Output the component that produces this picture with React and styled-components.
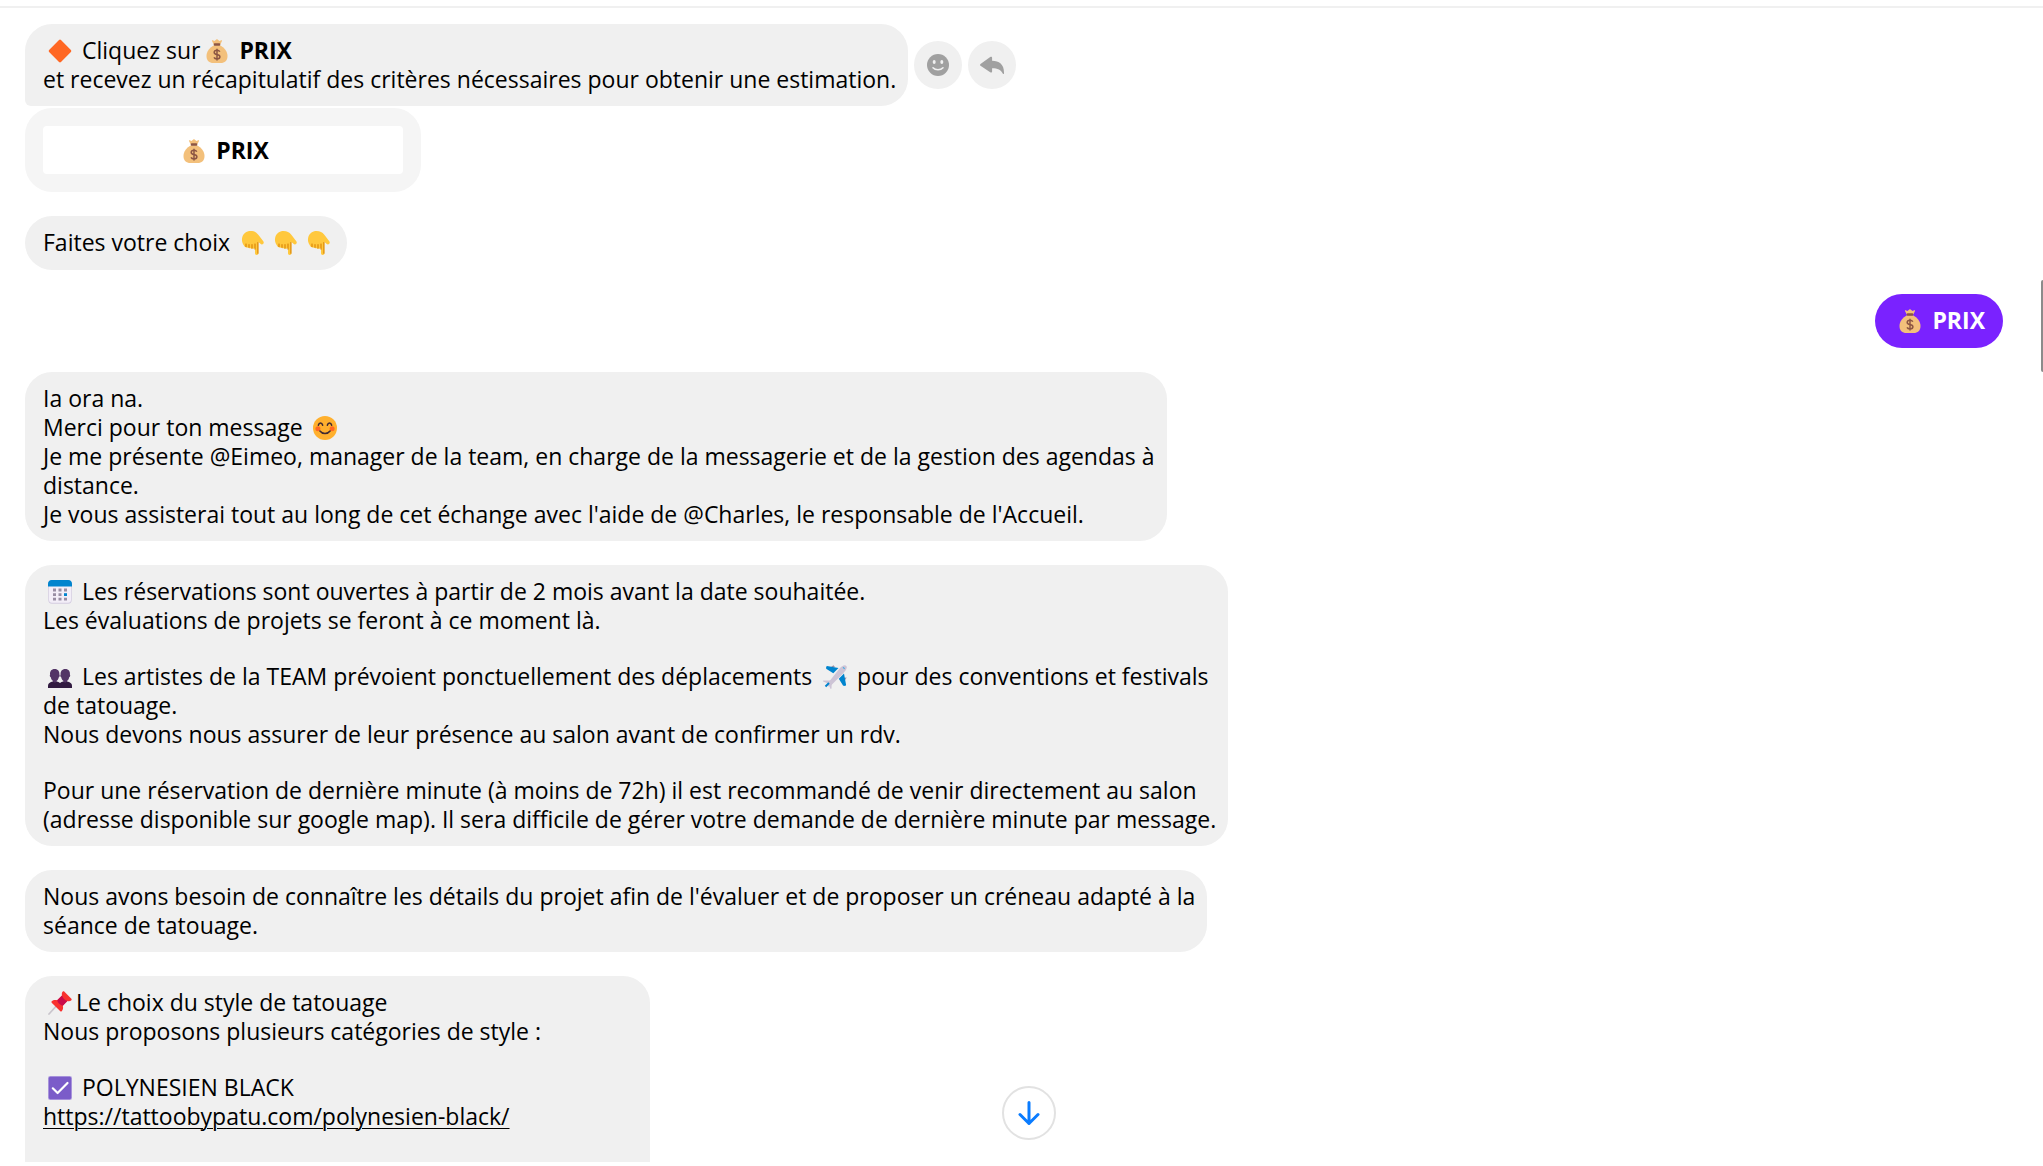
import React from "react";
import styled, { createGlobalStyle } from "styled-components";

const GlobalStyle = createGlobalStyle`
  * { box-sizing: border-box; }
  html, body { margin: 0; background: #fff; overflow: hidden; }
  body, button {
    font-family: "Open Sans", "Noto Sans", "Segoe UI", sans-serif;
    font-size: 23px;
    line-height: 29px;
    color: #000;
  }
`;

const Page = styled.main`
  position: relative;
  height: 100vh;
  padding: 6px 0 4px;
  overflow: hidden;
`;

const Thread = styled.section`
  display: flex;
  flex-direction: column;
  gap: 24px;
  height: 100%;
  padding: 16px 40px 0 25px;
  border-top: 2px solid #f0f0f0;
  overflow: hidden;
`;

const Group = styled.div`
  display: flex;
  flex-direction: column;
  gap: 2px;
  flex-shrink: 0;
`;

const Row = styled.div`
  display: flex;
  align-items: center;
  justify-content: ${(p) => (p.$own ? "flex-end" : "flex-start")};
  gap: 6px;
  flex-shrink: 0;
`;

const Bubble = styled.div`
  display: flex;
  flex-direction: column;
  gap: 27px;
  min-height: 54px;
  min-width: ${(p) => p.$minWidth || "0"};
  padding: ${(p) => (p.$own ? "12px 18px" : "12px 12px 12px 18px")};
  border-radius: 27px;
  border-bottom-left-radius: ${(p) => (p.$joined ? "6px" : "27px")};
  background: ${(p) => (p.$own ? "#7a22ff" : "#f0f0f0")};
  color: ${(p) => (p.$own ? "#fff" : "#000")};
  font-weight: ${(p) => (p.$own ? 700 : 400)};
`;

const LongBubble = styled(Bubble)`
  height: 320px;
`;

const Text = styled.p`
  margin: 0;
  white-space: nowrap;
`;

const Strong = styled.strong`
  font-weight: 700;
`;

const Link = styled.a`
  color: inherit;
  text-decoration: underline;
  text-underline-offset: 3px;
  text-decoration-thickness: 1px;
`;

const Card = styled.div`
  align-self: flex-start;
  padding: 18px;
  border-radius: 27px;
  background: #f5f5f5;
`;

const CardButton = styled.button`
  display: block;
  width: 360px;
  height: 48px;
  padding: 0;
  border: 0;
  border-radius: 4px;
  background: #fff;
  color: #000;
  font-weight: 700;
`;

const RoundButton = styled.button`
  display: grid;
  place-items: center;
  width: 48px;
  height: 48px;
  padding: 0;
  border: 0;
  border-radius: 50%;
  background: #f0f0f0;
  color: #a0a0a0;
`;

const ScrollDown = styled(RoundButton)`
  position: absolute;
  bottom: 26px;
  left: calc(50% - 20px);
  width: 54px;
  height: 54px;
  border: 2px solid #e2e2e2;
  background: #fff;
  color: #0a7cff;
`;

const ScrollThumb = styled.div`
  position: absolute;
  top: 24%;
  right: 0;
  width: 2px;
  height: 92px;
  border-radius: 2px 0 0 2px;
  background: #8b8b8b;
`;

const EmojiBox = styled.span`
  display: inline-flex;
  justify-content: center;
  width: 33px;
  height: 24px;
  vertical-align: -4px;
`;

const Emoji = ({ label, children }) => (
  <EmojiBox role="img" aria-label={label}>
    <svg width="24" height="24" viewBox="0 0 24 24">{children}</svg>
  </EmojiBox>
);

const Diamond = () => (
  <Emoji label="losange orange">
    <rect x="3.6" y="3.6" width="16.8" height="16.8" rx="1.4" transform="rotate(45 12 12)" fill="#ff6723" />
  </Emoji>
);

const MoneyBag = () => (
  <Emoji label="sac d'argent">
    <path d="M8.7 5.6 7 2.1c-.3-.6.2-1 .8-.8l1.6.6L11.3.4c.4-.3.9-.3 1.3 0l1.9 1.5 1.7-.6c.6-.2 1.1.2.8.8l-1.7 3.5z" fill="#f3c07b" />
    <path d="M9 6.3h6c4.3 2.2 7.5 6.2 7.5 10.7 0 4.7-2.6 7-7 7h-7c-4.4 0-7-2.3-7-7C1.5 12.5 4.7 8.5 9 6.3Z" fill="#f3c07b" />
    <rect x="8.8" y="4.3" width="6.4" height="2.4" rx=".8" fill="#8c5543" />
    <path d="M14.8 12.7c-.5-1.1-1.5-1.5-2.8-1.5-1.6 0-2.8.8-2.8 2.2 0 3.1 5.7 1.3 5.7 4.4 0 1.4-1.2 2.2-2.9 2.2-1.4 0-2.5-.5-3-1.6M12 9.7v11.8" fill="none" stroke="#8c5543" strokeWidth="1.5" />
  </Emoji>
);

const PointDown = () => (
  <Emoji label="index vers le bas">
    <path d="M1.2 6.5C2.2 2.6 5.4 0 9.5 0c3.6 0 5.8 1.2 7.8 3.8l5 6.5c.7.9.6 2-.2 2.7-.8.6-1.9.5-2.6-.2L17.4 11v11.3c0 1-.7 1.7-1.7 1.7s-1.7-.7-1.7-1.7v-5.5c-.4.9-1.5 1.2-2.4.7-.6.4-1.7.4-2.3-.4-.7.4-1.7.2-2.1-.6-1.7.5-3.4-.3-4.3-2C.8 11.4.7 8.8 1.2 6.5Z" fill="#ffc83d" />
    <path d="M14 13v5.2M11 13.6v3.6M8 13.6v2.8M5 13v2.6M16.9 11.5v10.8" fill="none" stroke="#d67d00" strokeWidth="1" strokeLinecap="round" />
  </Emoji>
);

const Smile = () => (
  <Emoji label="visage souriant">
    <circle cx="12" cy="12" r="12" fill="#ffb02e" />
    <circle cx="4.9" cy="12.7" r="2.5" fill="#ff6723" />
    <circle cx="19.1" cy="12.7" r="2.5" fill="#ff6723" />
    <path d="M5.3 9.3c.4-1.5 1.2-2.2 2.2-2.2s1.8.7 2.2 2.2M14.3 9.3c.4-1.5 1.2-2.2 2.2-2.2s1.8.7 2.2 2.2M6.9 15c2.4 3.3 7.8 3.3 10.2 0" fill="none" stroke="#402a32" strokeWidth="1.5" strokeLinecap="round" />
  </Emoji>
);

const Calendar = () => (
  <Emoji label="calendrier">
    <rect x=".3" y=".3" width="23.4" height="23.4" rx="3.6" fill="#d3cbe0" />
    <rect x="1" y="2" width="22" height="20.8" rx="3" fill="#f3eef8" />
    <path d="M0 6.5V3.6C0 1.6 1.6 0 3.6 0h16.8c2 0 3.6 1.6 3.6 3.6v2.9z" fill="#0084ce" />
    <path d="M5 8.6h3v2.8H5zM10.5 8.6h3v2.8h-3zM16 8.6h3v2.8h-3zM5 13.2h3V16H5zM10.5 13.2h3V16h-3zM5 17.7h3v2.8H5zM10.5 17.7h3v2.8h-3zM16 17.7h3v2.8h-3z" fill="#998ea4" />
    <path d="M16 13.2h3V16h-3z" fill="#0084ce" />
  </Emoji>
);

const People = () => (
  <Emoji label="deux silhouettes">
    <path d="M6.7 4c3.4 0 4.9 2.3 4.7 5.6.6.6.4 2.4-.6 2.6-.5 1.7-1 2.8-2.1 3.6V19H4.9v-3.2C3.8 15 3.2 13.9 2.8 12.2c-1-.2-1.3-2-.7-2.6C1.8 6.3 3.3 4 6.7 4ZM17.3 4c-3.4 0-4.9 2.3-4.7 5.6-.6.6-.4 2.4.6 2.6.5 1.7 1 2.8 2.1 3.6V19h3.8v-3.2c1.1-.8 1.7-1.9 2.1-3.6 1-.2 1.3-2 .7-2.6.3-3.3-1.2-5.6-4.6-5.6Z" fill="#533566" />
    <path d="M0 23v-2.3c0-2.4 2-3.5 5-4.1.7 1.2 3 1.2 3.7 0 1.3.3 2.4.7 3.3 1.3.9-.6 2-1 3.3-1.3.7 1.2 3 1.2 3.7 0 3 .6 5 1.7 5 4.1V23z" fill="#321b41" />
  </Emoji>
);

const Plane = () => (
  <Emoji label="avion">
    <path d="M8 2 10.5.3l1.6 1.9zM23.7 12.5l-1.9 3-1-2.8z" fill="#998ea4" />
    <path d="M3.5 4C2.8 3.3 3 1.3 4 .9L15.5 3l-5.2 5.2zM20 20.5c.7.7 2.7.5 3.1-.5L21 8.5l-5.2 5.2z" fill="#0084ce" />
    <path d="M21.8.3c1.6.3 2.3 1.3 1.9 2.7-.5 1.7-1.6 3.3-3 4.7L8.5 20c-1.3 1.1-2.8 1.5-3.8 1-1-.6-.7-2 .5-3.3L16.8 3.3c1.5-1.7 3.3-2.7 5-3Z" fill="#cdc4d6" />
    <path d="M.4 15.5c-.6.5-.4 1.1.3 1.3l4.8 2 3.2-3.3zM8.5 23.6c-.5.5-1.1.3-1.3-.3l-2-4.8 3.6-3.2z" fill="#cdc4d6" />
    <path d="M19.7 2.2c1.5 0 2.1.6 2.1 2.1-.8-.2-1.8-1.2-2.1-2.1Z" fill="#26a8e8" />
    <path d="m2.5 21.5 3.5-3.5" stroke="#0084ce" strokeWidth="2" />
  </Emoji>
);

const Pin = () => (
  <Emoji label="punaise">
    <path d="m1 23 10-11" stroke="#c9c5cc" strokeWidth="1.7" strokeLinecap="round" />
    <path d="M3.7 10.3c1.3-1.4 3.6-1.7 5.5-1.1L14 4.6c-.4-1.6-.2-3 .8-4 .4-.4 1-.4 1.4 0l7.2 7.2c.4.4.4 1 0 1.4-1 1-2.4 1.2-4 .8l-4.6 4.8c.6 1.9.3 4.2-1.1 5.5-.4.4-1 .4-1.4 0l-8.6-8.6c-.4-.4-.4-1 0-1.4Z" fill="#f8312f" />
    <path d="M9.2 9.2 14 4.6c.3 1.1 1 2.2 2 3.3s2.2 1.8 3.4 2.1l-4.6 4.8c-1.3-.3-2.5-1-3.5-2s-1.8-2.3-2.1-3.6Z" fill="#ca0b4a" />
  </Emoji>
);

const Check = () => (
  <Emoji label="case cochée">
    <rect width="24" height="24" rx="2" fill="#b4a3e0" />
    <rect x=".8" y=".8" width="22.4" height="22.4" rx="1.6" fill="#7b5cc9" />
    <path d="m4.8 12.3 4.8 4.7L19.5 7" fill="none" stroke="#fff" strokeWidth="2.2" strokeLinecap="round" strokeLinejoin="round" />
  </Emoji>
);

export default function App() {
  return (
    <>
      <GlobalStyle />
      <Page>
        <Thread>
          <Group>
            <Row>
              <Bubble $joined>
                <Text>
                  <Diamond /> Cliquez sur<MoneyBag /> <Strong>PRIX</Strong>
                  <br />
                  et recevez un récapitulatif des critères nécessaires pour obtenir une estimation.
                </Text>
              </Bubble>
              <RoundButton type="button" aria-label="Réagir">
                <svg width="24" height="24" viewBox="0 0 24 24">
                  <circle cx="12" cy="12" r="11" fill="currentColor" />
                  <ellipse cx="8.2" cy="9" rx="1.5" ry="2" fill="#f0f0f0" />
                  <ellipse cx="15.8" cy="9" rx="1.5" ry="2" fill="#f0f0f0" />
                  <path d="M7 14.8c2.5 2.6 7.5 2.6 10 0" fill="none" stroke="#f0f0f0" strokeWidth="1.6" strokeLinecap="round" />
                </svg>
              </RoundButton>
              <RoundButton type="button" aria-label="Répondre">
                <svg width="24" height="24" viewBox="0 0 24 24">
                  <path d="M.5 11.1 10.2 4c1-.7 1.9-.3 1.9.8v3c7 0 11.9 3.7 11.9 11.4v1.2c0 .8-1 .9-1.3.2-1.6-3.7-5-5.4-10.6-5.4v3.2c0 1.1-.9 1.5-1.9.8L.5 12.7c-.6-.5-.6-1.1 0-1.6Z" fill="currentColor" />
                </svg>
              </RoundButton>
            </Row>
            <Card>
              <CardButton type="button">
                <MoneyBag /> PRIX
              </CardButton>
            </Card>
          </Group>

          <Row>
            <Bubble>
              <Text>
                Faites votre choix <PointDown /><PointDown /><PointDown />
              </Text>
            </Bubble>
          </Row>

          <Row $own>
            <Bubble $own>
              <Text>
                <MoneyBag /> PRIX
              </Text>
            </Bubble>
          </Row>

          <Row>
            <Bubble>
              <Text>
                Ia ora na.
                <br />
                Merci pour ton message <Smile />
                <br />
                Je me présente @Eimeo, manager de la team, en charge de la messagerie et de la gestion des agendas à
                <br />
                distance.
                <br />
                Je vous assisterai tout au long de cet échange avec l'aide de @Charles, le responsable de l'Accueil.
              </Text>
            </Bubble>
          </Row>

          <Row>
            <Bubble>
              <Text>
                <Calendar /> Les réservations sont ouvertes à partir de 2 mois avant la date souhaitée.
                <br />
                Les évaluations de projets se feront à ce moment là.
              </Text>
              <Text>
                <People /> Les artistes de la TEAM prévoient ponctuellement des déplacements <Plane /> pour des conventions et festivals
                <br />
                de tatouage.
                <br />
                Nous devons nous assurer de leur présence au salon avant de confirmer un rdv.
              </Text>
              <Text>
                Pour une réservation de dernière minute (à moins de 72h) il est recommandé de venir directement au salon
                <br />
                (adresse disponible sur google map). Il sera difficile de gérer votre demande de dernière minute par message.
              </Text>
            </Bubble>
          </Row>

          <Row>
            <Bubble>
              <Text>
                Nous avons besoin de connaître les détails du projet afin de l'évaluer et de proposer un créneau adapté à la
                <br />
                séance de tatouage.
              </Text>
            </Bubble>
          </Row>

          <Row>
            <LongBubble $minWidth="625px">
              <Text>
                <Pin />Le choix du style de tatouage
                <br />
                Nous proposons plusieurs catégories de style :
              </Text>
              <Text>
                <Check /> POLYNESIEN BLACK
                <br />
                <Link href="https://tattoobypatu.com/polynesien-black/">https://tattoobypatu.com/polynesien-black/</Link>
              </Text>
            </LongBubble>
          </Row>
        </Thread>
        <ScrollThumb />
        <ScrollDown type="button" aria-label="Aller au dernier message">
          <svg width="24" height="24" viewBox="0 0 24 24" fill="none" stroke="currentColor" strokeWidth="3" strokeLinecap="round" strokeLinejoin="round">
            <path d="M12 1.5v21M3 13.5l9 9 9-9" />
          </svg>
        </ScrollDown>
      </Page>
    </>
  );
}
